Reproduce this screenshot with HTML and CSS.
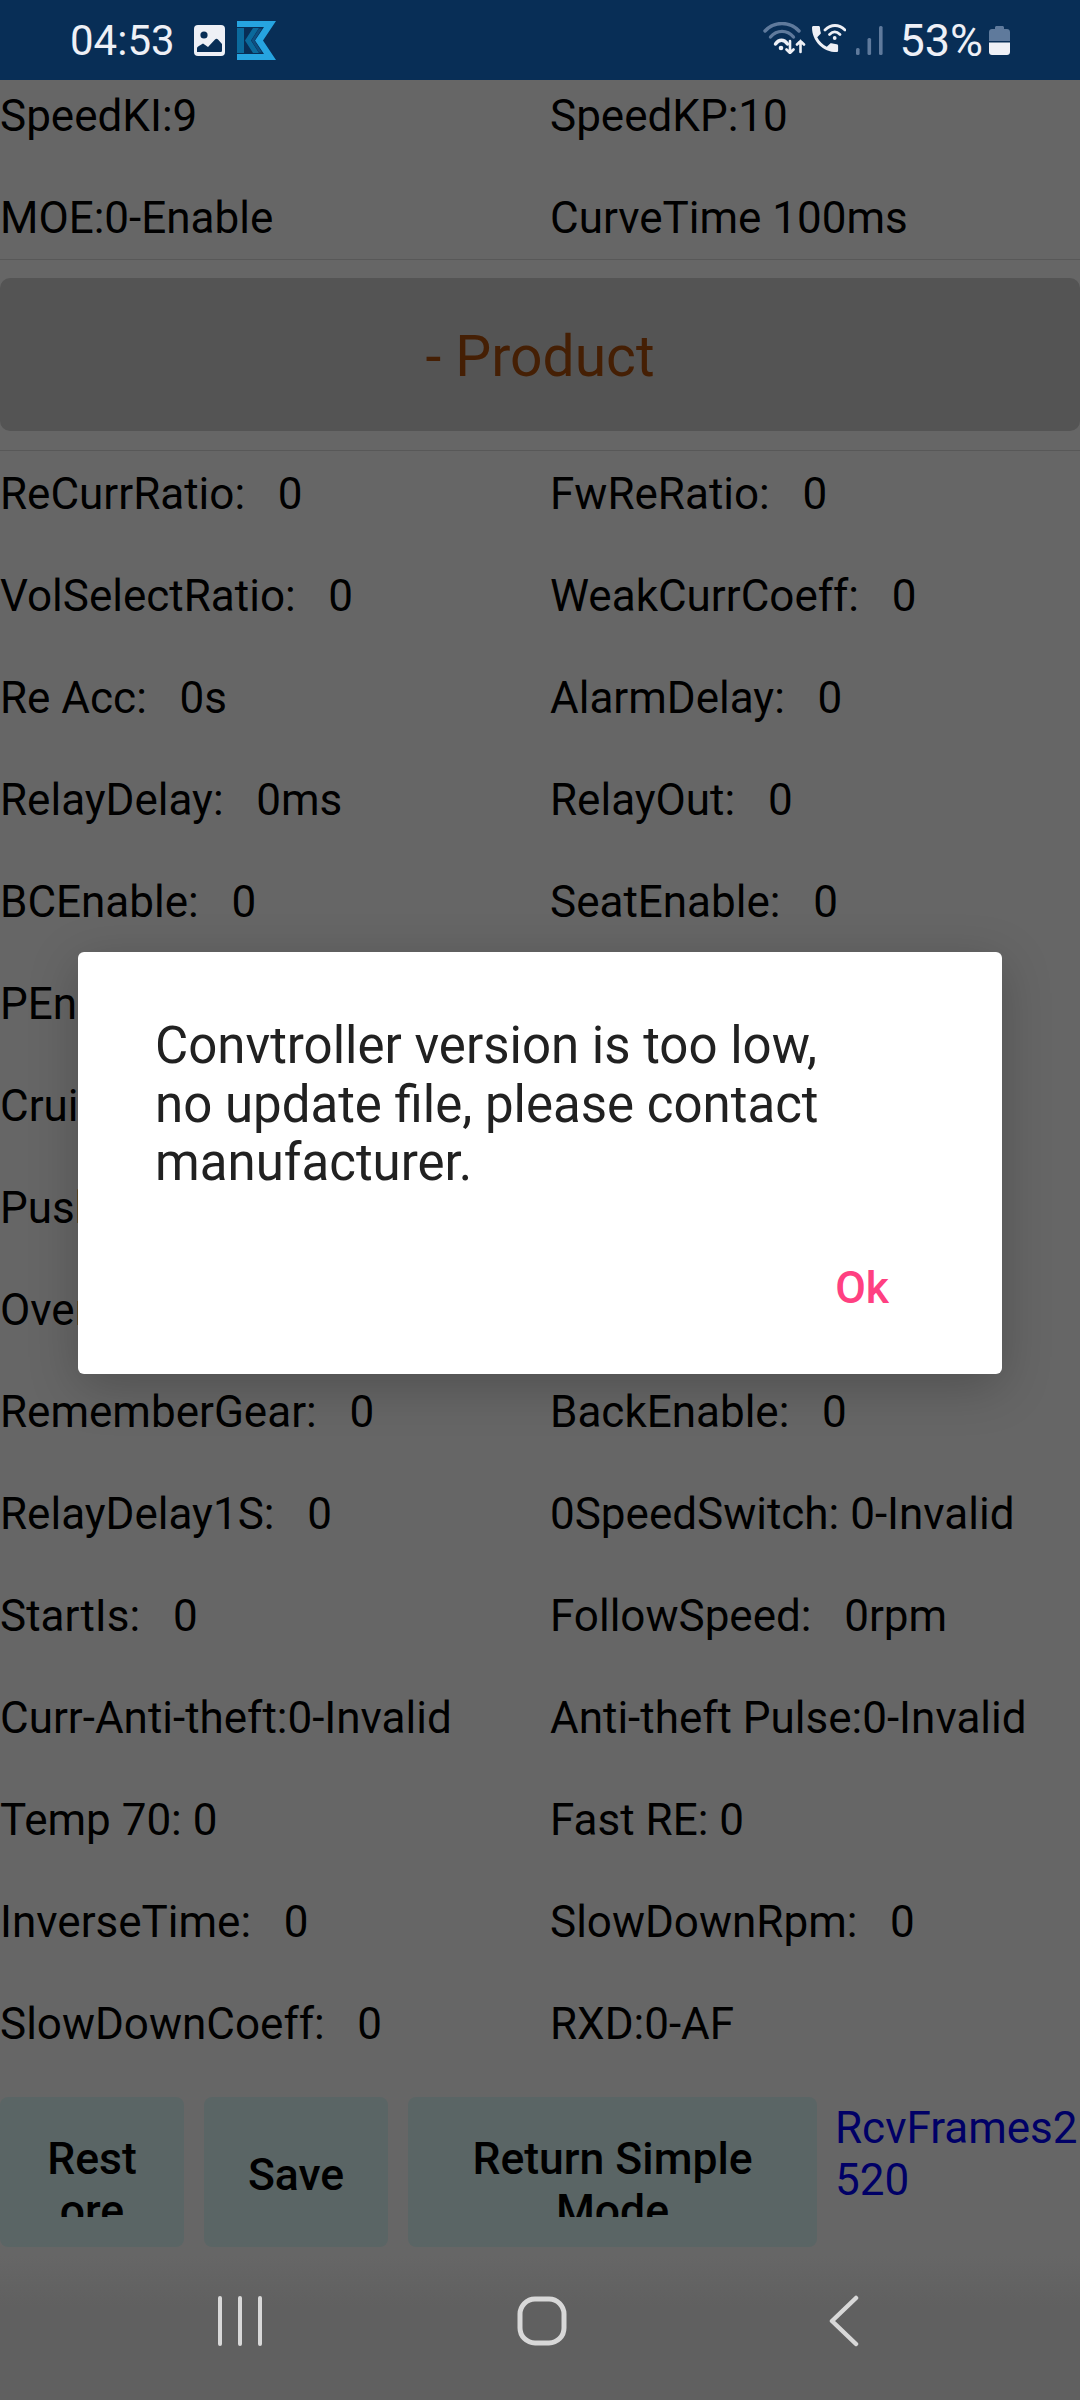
FILE: index.html
```html
<!DOCTYPE html>
<html lang="en">
<head>
  <meta charset="UTF-8" />
  <meta name="viewport" content="width=device-width, initial-scale=1.0">
  <title>Controller</title>
  <link rel="stylesheet" href="styles.css">
</head>
<body>
  <div class="status-bar">
    <div class="status-left">
      <span class="clock">04:53</span>
      <svg class="ico-image" viewBox="0 0 31 31">
        <rect width="31" height="31" rx="4" fill="#eef0f6"/>
        <circle cx="10" cy="10" r="3.6" fill="#082e56"/>
        <path d="M3 27v-3.5c0-1 .5-1.6 1.5-2.2L9 18.5l5 3.5 7-7.5c1-1 2-1 3 0l4 4.5v6.5c0 1-.7 1.5-1.5 1.5z" fill="#082e56"/>
      </svg>
      <svg class="ico-k" viewBox="0 0 39 39">
        <path d="M0 0H39L26 19.5 39 39H0V33H27L18 19.5 27 6H0z" fill="#26a4e0"/>
        <path d="M0 7H7V32H0zM8 19.5 16 7H22L14 19.5 22 32H16z" fill="#0b6a9c"/>
        <path d="M14.500 19.500 22 7.500H25L17.500 19.500 25 31.500H22z" fill="#0f4f80"/>
      </svg>
    </div>
    <div class="status-right">
      <svg class="ico-wifi" viewBox="0 0 43 32" fill="none" stroke-linecap="round">
        <path d="M2 9C11 -1 27 -1 36 9" stroke="#5f7a9c" stroke-width="3.400"/>
        <path d="M7.500 15C14 7.500 24 7.500 30.500 15" stroke="#5f7a9c" stroke-width="3.400"/>
        <path d="M12.500 22C16 17 21 17 24.500 22" stroke="#eef0f6" stroke-width="3.400"/>
        <circle cx="18" cy="26" r="2.300" fill="#eef0f6"/>
        <path d="M27 19V31M23.500 27.500 27 31 30.500 27.500M37.500 30V19M34 22.500 37.500 19 41 22.500" stroke="#eef0f6" stroke-width="2.600"/>
      </svg>
      <svg class="ico-call" viewBox="0 0 35 32" fill="none" stroke-linecap="round">
        <path transform="translate(-3.350 -2.350) scale(1.450)" d="M6.620 10.790c1.440 2.830 3.760 5.140 6.590 6.590l2.200-2.200c.27-.27.67-.36 1.020-.24 1.120.37 2.330.57 3.570.57.550 0 1 .45 1 1V20c0 .55-.45 1-1 1-9.390 0-17-7.610-17-17 0-.55.45-1 1-1h3.500c.55 0 1 .45 1 1 0 1.250.2 2.450.57 3.570.11.35.03.74-.25 1.020l-2.200 2.200z" fill="#eef0f6"/>
        <path d="M14 6C20 0 28 0 34 6" stroke="#eef0f6" stroke-width="2.800"/>
        <path d="M18.500 10.500C22 7 25.500 7 29 10.500" stroke="#eef0f6" stroke-width="2.800"/>
        <circle cx="23.700" cy="14" r="1.900" fill="#eef0f6"/>
      </svg>
      <svg class="ico-signal" viewBox="0 0 27 29" fill="#5f7a9c">
        <rect x="0" y="22" width="3.600" height="7" rx="1.500"/>
        <rect x="11.500" y="12" width="3.600" height="17" rx="1.500"/>
        <rect x="23" y="0" width="3.600" height="29" rx="1.500"/>
      </svg>
      <span class="battery-pct">53%</span>
      <svg class="ico-battery" viewBox="0 0 21 29">
        <path d="M6 3V1.500C6 .7 6.700 0 7.500 0h6c.8 0 1.500.7 1.500 1.500V3h3c1.700 0 3 1.300 3 3v9H0V6c0-1.700 1.300-3 3-3z" fill="#5f7a9c"/>
        <path d="M0 16.500H21V26c0 1.700-1.300 3-3 3H3c-1.700 0-3-1.300-3-3z" fill="#eef0f6"/>
      </svg>
    </div>
  </div>

  <div class="main">
    <div class="param-grid top-grid">
      <div>SpeedKI:9</div><div>SpeedKP:10</div>
      <div>MOE:0-Enable</div><div>CurveTime 100ms</div>
    </div>

    <div class="divider"></div>
    <div class="section-band">- Product</div>
    <div class="divider"></div>

    <div class="param-grid">
      <div>ReCurrRatio:   0</div><div>FwReRatio:   0</div>
      <div>VolSelectRatio:   0</div><div>WeakCurrCoeff:   0</div>
      <div>Re Acc:   0s</div><div>AlarmDelay:   0</div>
      <div>RelayDelay:   0ms</div><div>RelayOut:   0</div>
      <div>BCEnable:   0</div><div>SeatEnable:   0</div>
      <div>PEnable:   0</div><div></div>
      <div>CruiseEnable:   0</div><div></div>
      <div>PushEnable:   0</div><div></div>
      <div>OverSpeed:   0</div><div></div>
      <div>RememberGear:   0</div><div>BackEnable:   0</div>
      <div>RelayDelay1S:   0</div><div>0SpeedSwitch: 0-Invalid</div>
      <div>StartIs:   0</div><div>FollowSpeed:   0rpm</div>
      <div>Curr-Anti-theft:0-Invalid</div><div>Anti-theft Pulse:0-Invalid</div>
      <div>Temp 70: 0</div><div>Fast RE: 0</div>
      <div>InverseTime:   0</div><div>SlowDownRpm:   0</div>
      <div>SlowDownCoeff:   0</div><div>RXD:0-AF</div>
    </div>

    <div class="action-row">
      <div class="action-btn btn-small"><span class="btn-label">Rest<br>ore</span></div>
      <div class="action-btn btn-small"><span class="btn-label">Save</span></div>
      <div class="action-btn btn-wide"><span class="btn-label">Return Simple<br>Mode</span></div>
      <div class="frames">RcvFrames2520</div>
    </div>

    <div class="scrim"></div>
    <div class="dialog">
      <p class="dialog-msg">Convtroller version is too low,<br>no update file, please contact<br>manufacturer.</p>
      <div class="dialog-actions"><span class="dialog-ok">Ok</span></div>
    </div>
  </div>

  <div class="nav-bar">
    <svg class="nav-ico" width="44" height="50" viewBox="0 0 44 50" fill="none" stroke="#d8d8d8" stroke-width="4" stroke-linecap="round">
      <path d="M2 2V48M22 2V48M42 2V48"/>
    </svg>
    <svg class="nav-ico" width="50" height="50" viewBox="0 0 50 50" fill="none" stroke="#d8d8d8" stroke-width="5">
      <rect x="3" y="3" width="44" height="44" rx="15"/>
    </svg>
    <svg class="nav-ico" width="30" height="52" viewBox="0 0 30 52" fill="none" stroke="#d8d8d8" stroke-width="4.500" stroke-linecap="round" stroke-linejoin="round">
      <path d="M27 3 3 26 27 49"/>
    </svg>
  </div>
</body>
</html>
```

FILE: styles.css
```css
* {
  box-sizing: border-box;
}
body {
  margin: 0;
  width: 1080px;
  height: 2400px;
  display: flex;
  flex-direction: column;
  overflow: hidden;
  background: #fff;
  font-family: Roboto, sans-serif;
  color: #000;
}

.status-bar {
  height: 80px;
  flex: none;
  display: flex;
  align-items: center;
  justify-content: space-between;
  padding: 0 70px 0 70px;
  background: #082e56;
  color: #eef0f6;
  font-size: 42px;
}
.status-left,
.status-right {
  display: flex;
  align-items: center;
}
.ico-image {
  width: 31px;
  height: 31px;
  margin-left: 19px;
}
.ico-k {
  width: 39px;
  height: 39px;
  margin-left: 12px;
}
.ico-wifi {
  width: 43px;
  height: 32px;
  margin-bottom: 4px;
}
.ico-call {
  width: 35px;
  height: 32px;
  margin-left: 5px;
}
.ico-signal {
  width: 27px;
  height: 29px;
  margin-left: 10px;
}
.battery-pct {
  margin-left: 16px;
  font-size: 45px;
}
.ico-battery {
  width: 21px;
  height: 29px;
  margin-left: 6px;
}

.main {
  position: relative;
  flex: 1;
  padding-top: 6px;
  overflow: hidden;
}
.param-grid {
  display: grid;
  grid-template-columns: 550px 1fr;
  grid-auto-rows: 60px;
  row-gap: 42px;
  font-size: 44px;
  line-height: 60px;
  white-space: pre;
}
.divider {
  height: 1px;
  margin-top: 11px;
  background: #dcdcdc;
}
.section-band {
  height: 153px;
  margin: 18px 0 19px;
  padding-top: 4px;
  border-radius: 10px;
  background: #d2d2d2;
  color: #ac4e0c;
  font-size: 57px;
  line-height: 149px;
  text-align: center;
}
.section-band + .divider {
  margin-top: 0;
  margin-bottom: 13px;
}

.action-row {
  display: flex;
  gap: 20px;
  margin-top: 43px;
  height: 150px;
}
.action-btn {
  display: flex;
  align-items: center;
  justify-content: center;
  flex: none;
  height: 150px;
  padding: 36px 0 30px;
  border-radius: 8px;
  background: #e1fcfc;
  font-size: 44.5px;
  font-weight: 500;
  line-height: 52px;
  text-align: center;
  overflow: hidden;
}
.btn-label {
  display: block;
  max-height: 84px;
  overflow: hidden;
}
.btn-small {
  width: 184px;
}
.btn-wide {
  width: 409px;
}
.frames {
  flex: 1;
  margin-left: -2px;
  padding-top: 5px;
  color: #0000ff;
  font-size: 44px;
  line-height: 52px;
  word-break: break-all;
}

.scrim {
  position: absolute;
  inset: 0;
  background: rgba(0, 0, 0, 0.6);
}
.dialog {
  position: absolute;
  left: 78px;
  top: 872px;
  width: 924px;
  height: 422px;
  padding: 65px 78px 0 77px;
  border-radius: 6px;
  background: #fff;
  box-shadow: 0 12px 50px rgba(0, 0, 0, 0.22);
}
.dialog-msg {
  margin: 0;
  color: #212121;
  font-size: 51px;
  line-height: 58.5px;
}
.dialog-actions {
  display: flex;
  justify-content: flex-end;
  margin-top: 70px;
  padding-right: 35px;
}
.dialog-ok {
  color: #ff4081;
  font-size: 44.5px;
  font-weight: 500;
  line-height: 50px;
}

.nav-bar {
  height: 144px;
  flex: none;
  display: grid;
  grid-template-columns: repeat(3, 302px);
  justify-items: center;
  align-items: center;
  padding: 0 85px 14px 89px;
  background: linear-gradient(#666666, #606060 50px);
}
```
